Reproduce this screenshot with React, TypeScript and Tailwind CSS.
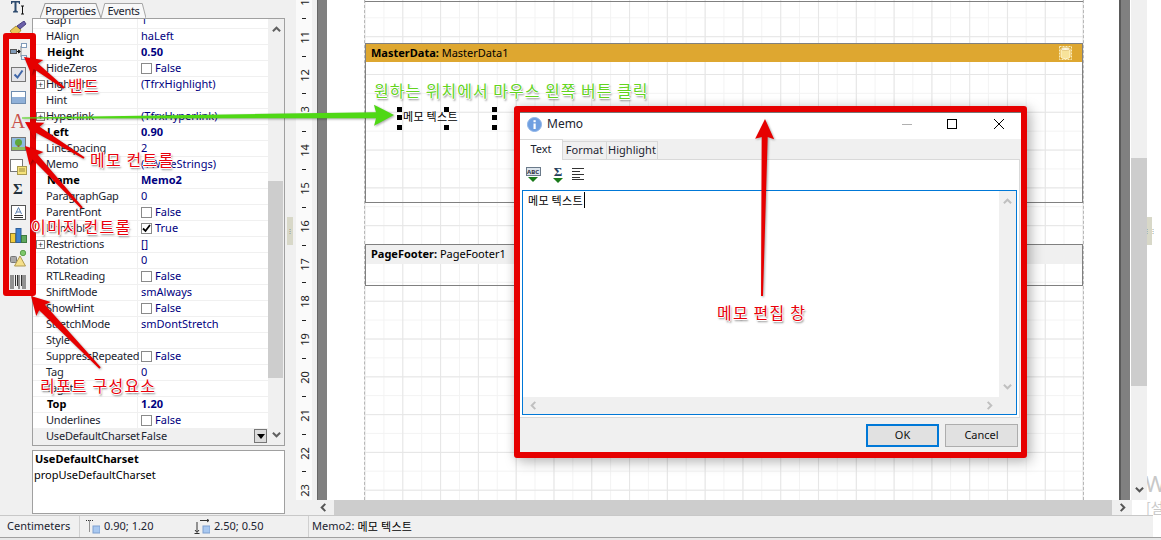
import type { ReactNode } from 'react';

const KR = "font-['Noto_Sans_CJK_KR','Noto_Sans',sans-serif]";

type Row = {
  name: string;
  value?: string;
  bold?: boolean;
  plus?: boolean;
  check?: boolean;
  checked?: boolean;
  selected?: boolean;
};

const rows: Row[] = [
  { name: 'Gap1', value: '1' },
  { name: 'HAlign', value: 'haLeft' },
  { name: 'Height', value: '0.50', bold: true },
  { name: 'HideZeros', value: 'False', check: true },
  { name: 'Highlight', value: '(TfrxHighlight)', plus: true },
  { name: 'Hint' },
  { name: 'Hyperlink', value: '(TfrxHyperlink)', plus: true },
  { name: 'Left', value: '0.90', bold: true },
  { name: 'LineSpacing', value: '2' },
  { name: 'Memo', value: '(TWideStrings)' },
  { name: 'Name', value: 'Memo2', bold: true },
  { name: 'ParagraphGap', value: '0' },
  { name: 'ParentFont', value: 'False', check: true },
  { name: 'Printable', value: 'True', check: true, checked: true },
  { name: 'Restrictions', value: '[]', plus: true },
  { name: 'Rotation', value: '0' },
  { name: 'RTLReading', value: 'False', check: true },
  { name: 'ShiftMode', value: 'smAlways' },
  { name: 'ShowHint', value: 'False', check: true },
  { name: 'StretchMode', value: 'smDontStretch' },
  { name: 'Style' },
  { name: 'SuppressRepeated', value: 'False', check: true },
  { name: 'Tag', value: '0' },
  { name: 'TagStr' },
  { name: 'Top', value: '1.20', bold: true },
  { name: 'Underlines', value: 'False', check: true },
  { name: 'UseDefaultCharset', value: 'False', selected: true },
];

const rulerNumbers = [10, 11, 12, 13, 14, 15, 16, 17, 18, 19, 20, 21, 22, 23];

function Chevron({ dir, color = '#555555', size = 9 }: { dir: 'up' | 'down' | 'left' | 'right'; color?: string; size?: number }) {
  const points = {
    up: '1,7 5,3 9,7',
    down: '1,3 5,7 9,3',
    left: '7,1 3,5 7,9',
    right: '3,1 7,5 3,9',
  }[dir];
  return (
    <svg width={size} height={size} viewBox="0 0 10 10" className="shrink-0">
      <polyline points={points} fill="none" stroke={color} strokeWidth="2.2" />
    </svg>
  );
}

function ToolCell({ children, short }: { children: ReactNode; short?: boolean }) {
  return <div className={`flex w-[36px] shrink-0 items-center justify-center ${short ? 'h-[19px]' : 'h-[23px]'}`}>{children}</div>;
}

function Toolbar() {
  return (
    <div className="-mt-[2px] flex w-[32px] shrink-0 flex-col items-start overflow-hidden bg-[#f0f0f0]">
      <ToolCell short>
        <svg width="14" height="15" viewBox="0 0 14 15">
          <path d="M0 1h9v3H8L7.500 2.500H5.500v8l1.500 1v1H2v-1l1.500-1v-8h-2L1 4H0z" fill="#2d4a6e" />
          <path d="M10 6h3M10 14h3M11.500 6v8" stroke="#111" fill="none" />
        </svg>
      </ToolCell>
      <ToolCell>
        <svg width="18" height="16" viewBox="0 0 18 16">
          <path d="M1 10l6-5 5 4c-2 4-7 7-11 1z" fill="#e8c75a" stroke="#a8903c" />
          <path d="M8 5l7-5 2 3-6 5z" fill="#6a5fa8" stroke="#4a4080" />
        </svg>
      </ToolCell>
      <ToolCell>
        <svg width="17" height="17" viewBox="0 0 17 17">
          <rect x="0.500" y="6.500" width="6" height="4" fill="#7f9ab8" stroke="#555" />
          <path d="M7 8.500h2M8.500 7l2 1.500-2 1.500z" stroke="#111" fill="#111" />
          <path d="M11 3v11" stroke="#888" />
          <rect x="11.500" y="0.500" width="5" height="4" fill="#fff" stroke="#7f9ab8" />
          <rect x="11.500" y="12.500" width="5" height="4" fill="#e8f0fa" stroke="#7f9ab8" />
        </svg>
      </ToolCell>
      <ToolCell>
        <svg width="15" height="15" viewBox="0 0 15 15">
          <rect x="0.500" y="0.500" width="14" height="14" fill="#e4e4e8" stroke="#777" />
          <path d="M3.500 7.500l3 3 5-7" fill="none" stroke="#3f66a8" strokeWidth="2" />
        </svg>
      </ToolCell>
      <ToolCell>
        <svg width="15" height="13" viewBox="0 0 15 13">
          <rect x="0.500" y="0.500" width="14" height="12" fill="#fff" stroke="#6f8db0" />
          <rect x="1" y="6" width="13" height="6" fill="#8fb0d8" />
        </svg>
      </ToolCell>
      <ToolCell>
        <span className="font-['Liberation_Serif',serif] text-[20px] leading-none text-[#c8504a]">A</span>
      </ToolCell>
      <ToolCell>
        <svg width="15" height="14" viewBox="0 0 15 14">
          <rect x="0.500" y="0.500" width="14" height="13" fill="#8fbbe0" stroke="#777" />
          <circle cx="7.500" cy="5.500" r="3.500" fill="#5fa83c" />
          <rect x="6.500" y="8" width="2" height="3" fill="#8a6a3a" />
          <rect x="1" y="10" width="13" height="3" fill="#8fc060" />
        </svg>
      </ToolCell>
      <ToolCell>
        <svg width="17" height="16" viewBox="0 0 17 16">
          <rect x="0.500" y="0.500" width="12" height="12" fill="#fff" stroke="#777" />
          <rect x="7.500" y="7.500" width="9" height="8" fill="#f5e27a" stroke="#a89a50" />
          <path d="M9 10h6M9 12h6" stroke="#9a8a40" />
        </svg>
      </ToolCell>
      <ToolCell>
        <span className="font-['Liberation_Serif',serif] text-[15px] leading-none font-bold text-[#23303c]">Σ</span>
      </ToolCell>
      <ToolCell>
        <svg width="15" height="15" viewBox="0 0 15 15">
          <rect x="0.500" y="0.500" width="14" height="14" fill="#fff" stroke="#555" />
          <path d="M7.500 2.500l-3 6.500M7.500 2.500l3 6.500M5.500 7h4" stroke="#5a7fb0" fill="none" />
          <path d="M3 10.500h9M3 12.500h9" stroke="#333" />
        </svg>
      </ToolCell>
      <ToolCell>
        <svg width="17" height="15" viewBox="0 0 17 15">
          <rect x="0.500" y="5.500" width="5" height="9" fill="#f2cc3c" stroke="#8a7a30" />
          <rect x="6" y="0.500" width="5" height="14" fill="#3f82d0" stroke="#2f5f9a" />
          <rect x="11.500" y="7.500" width="5" height="7" fill="#5fa85c" stroke="#3f7a40" />
        </svg>
      </ToolCell>
      <ToolCell>
        <svg width="17" height="17" viewBox="0 0 17 17">
          <rect x="0.500" y="6.500" width="6" height="6" rx="1" fill="#a8a8a8" stroke="#777" />
          <circle cx="13" cy="3" r="2.700" fill="#7fc86a" stroke="#5fa04c" />
          <path d="M10 6l5.500 10h-11z" fill="#f5e08a" stroke="#b09a50" />
        </svg>
      </ToolCell>
      <ToolCell>
        <svg width="16" height="16" viewBox="0 0 16 16">
          <path d="M1 1v14M3 1v14M5.500 1v11M7.500 1v11M9 1v14M11.500 1v11M13 1v14M15 1v14" stroke="#333" fill="none" />
        </svg>
      </ToolCell>
    </div>
  );
}

function Checkbox({ checked }: { checked?: boolean }) {
  return (
    <span className="flex h-[11px] w-[11px] shrink-0 items-center justify-center border border-[#8a8a8a] bg-white">
      {checked && (
        <svg width="9" height="9" viewBox="0 0 9 9">
          <path d="M1 4.500l2.500 2.500 4.500-6" fill="none" stroke="#000" strokeWidth="1.800" />
        </svg>
      )}
    </span>
  );
}

function PropertyRow({ row }: { row: Row }) {
  return (
    <div className={`flex h-[16px] shrink-0 border-b border-[#f0f0f0] ${row.selected ? 'bg-[#f0f0f0]' : 'bg-white'}`}>
      <div className="relative flex w-[105px] shrink-0 items-center border-r border-[#f0f0f0] pl-[13px]">
        {row.plus && (
          <span className="absolute top-[3px] left-[3px] flex h-[9px] w-[9px] items-center justify-center border border-[#808080] bg-white text-[9px] leading-none text-[#333]">
            +
          </span>
        )}
        <span className={`whitespace-nowrap text-[11px] ${row.bold ? 'pl-[1px] font-bold text-black' : 'tracking-[-0.2px] text-[#1b2430]'}`}>{row.name}</span>
      </div>
      <div className="relative flex flex-1 items-center gap-[3px] pl-[3px]">
        {row.check && <Checkbox checked={row.checked} />}
        <span className={`whitespace-nowrap text-[11px] ${row.bold ? 'font-bold text-[#00007f]' : row.selected ? 'text-[#1b2430]' : 'text-[#00007f]'}`}>{row.value}</span>
        {row.selected && (
          <span className="absolute top-[0px] right-[1px] flex h-[14px] w-[13px] items-center justify-center border border-[#777] bg-[#dcdcdc]">
            <span className="h-0 w-0 border-x-[4px] border-t-[5px] border-x-transparent border-t-black" />
          </span>
        )}
      </div>
    </div>
  );
}

function InspectorTab({ label, width }: { label: string; width: string }) {
  return (
    <div className={`relative flex h-[15px] items-center justify-center pt-[1px] text-[11px] tracking-[-0.3px] text-[#1b2430] ${width}`}>
      <svg className="absolute inset-0 h-full w-full" viewBox="0 0 60 15" preserveAspectRatio="none">
        <path d="M0 15L5 0.500H55L60 15" fill="#f8f8f8" stroke="#9a9a9a" />
      </svg>
      <span className="relative">{label}</span>
    </div>
  );
}

function Inspector() {
  return (
    <div className="flex w-[254px] shrink-0 flex-col">
      <div className="flex h-[18px] shrink-0 items-end pl-[8px]">
        <InspectorTab label="Properties" width="w-[61px]" />
        <InspectorTab label="Events" width="w-[45px]" />
      </div>
      <div className="flex h-[428px] shrink-0 overflow-hidden border border-[#a0a0a0] ml-[0px] mr-[1px]">
        <div className="-mt-[6px] flex w-[235px] shrink-0 flex-col">
          {rows.map((row) => (
            <PropertyRow key={row.name} row={row} />
          ))}
        </div>
        <div className="relative flex flex-1 flex-col items-center justify-between bg-[#f0f0f0] py-[6px]">
          <Chevron dir="up" color="#606060" />
          <div className="absolute top-[162px] right-[1px] left-0 h-[197px] bg-[#cdcdcd]" />
          <Chevron dir="down" color="#606060" />
        </div>
      </div>
      <div className="mt-[4px] mr-[1px] flex h-[64px] shrink-0 flex-col border border-[#a0a0a0] bg-white pl-[1px] text-[11px] leading-[16px] text-black">
        <span className="pl-[1px] font-bold">UseDefaultCharset</span>
        <span>propUseDefaultCharset</span>
      </div>
    </div>
  );
}

function Ruler() {
  return (
    <div className="flex w-[16px] shrink-0 flex-col items-center overflow-hidden bg-[#fafafa]">
      <div className="-mt-[10px] flex flex-col items-center">
        {rulerNumbers.map((n) => (
          <div key={n} className="flex h-[37.8px] shrink-0 flex-col items-center">
            <div className="flex h-[18.9px] items-center justify-center">
              <span className="-rotate-90 text-[11px] leading-none text-[#222]">{n}</span>
            </div>
            <div className="flex h-[18.9px] items-center justify-center">
              <span className="h-[1px] w-[4px] bg-[#222]" />
            </div>
          </div>
        ))}
      </div>
    </div>
  );
}

function BandIcon() {
  return (
    <svg width="13" height="14" viewBox="0 0 13 14">
      <rect x="0.500" y="0.500" width="12" height="13" fill="none" stroke="#f8eec0" strokeDasharray="2 1" />
      <path d="M2 3c0-2 9-2 9 0v8c0 2-9 2-9 0z" fill="#f7e39a" stroke="#fff6d0" />
      <ellipse cx="6.500" cy="3" rx="4.500" ry="1.500" fill="#fff8e0" stroke="#c8a040" strokeWidth="0.500" />
    </svg>
  );
}

function Handle({ pos }: { pos: string }) {
  return <span className={`absolute h-[5px] w-[5px] bg-black ${pos}`} />;
}

function Page() {
  return (
    <div className="flex h-full w-[720px] shrink-0 flex-col border-x border-dashed border-[#b8b8b8] bg-white bg-[linear-gradient(to_right,#e6e6e6_1px,transparent_1px),linear-gradient(to_bottom,#e6e6e6_1px,transparent_1px),linear-gradient(to_right,#f3f3f3_1px,transparent_1px),linear-gradient(to_bottom,#f3f3f3_1px,transparent_1px)] bg-size-[37.8px_37.8px,37.8px_37.8px,18.9px_18.9px,18.9px_18.9px] bg-position-[37.3px_36.2px]">
      <div className="h-[2px] shrink-0 border-b border-[#808080]" />
      <div className="relative mt-[41px] h-[160px] shrink-0 border border-[#808080]">
        <div className="flex h-[18px] items-center justify-between bg-[#dea730] pr-[10px] pl-[5px] text-[11px] text-black">
          <span>
            <b>MasterData:</b> MasterData1
          </span>
          <BandIcon />
        </div>
        <Handle pos="left-[31px] top-[63px]" />
        <Handle pos="left-[78px] top-[63px]" />
        <Handle pos="left-[126px] top-[63px]" />
        <Handle pos="left-[31px] top-[71px]" />
        <Handle pos="left-[126px] top-[71px]" />
        <Handle pos="left-[31px] top-[81px]" />
        <Handle pos="left-[78px] top-[81px]" />
        <Handle pos="left-[126px] top-[81px]" />
        <span className={`absolute top-[64px] left-[37px] text-[11px] leading-[16px] tracking-[0.3px] whitespace-nowrap text-black ${KR}`}>메모 텍스트</span>
        <span className={`absolute top-[35px] left-[8px] text-[16px] leading-[22px] tracking-[1px] whitespace-nowrap text-[#63d41f] [text-shadow:1px_0_0_#fff,-1px_0_0_#fff,0_1px_0_#fff,0_-1px_0_#fff,1px_2px_2px_#777] ${KR}`}>
          원하는 위치에서 마우스 왼쪽 버튼 클릭
        </span>
      </div>
      <div className="mt-[41px] h-[42px] shrink-0 border border-[#808080]">
        <div className="flex h-[19px] items-center bg-[#f0f0f0] pl-[5px] text-[11px] text-black">
          <span>
            <b>PageFooter:</b> PageFooter1
          </span>
        </div>
      </div>
    </div>
  );
}

function Workspace() {
  return (
    <div className="flex min-w-0 flex-1 flex-col">
      <div className="flex h-[500px] shrink-0">
        <Ruler />
        <div className="w-[5px] shrink-0 bg-[#f0f0f0]" />
        <div className="w-[10px] shrink-0 border-l border-[#666] bg-[#808080]" />
        <div className="flex w-[792px] shrink-0 justify-start overflow-hidden bg-white pl-[37px]">
          <Page />
        </div>
        <div className="w-[11px] shrink-0 border-l-[2px] border-[#5a5a5a] bg-[#808080]" />
        <div className="w-[1px] shrink-0 bg-white" />
        <div className="relative flex w-[16px] shrink-0 flex-col items-center justify-end bg-[#f0f0f0] pb-[6px]">
          <div className="absolute top-[158px] left-0 h-[228px] w-full bg-[#cdcdcd]" />
          <Chevron dir="down" />
        </div>
        <div className="relative flex-1 overflow-hidden bg-white">
          <div className="absolute top-[217px] left-0 flex h-[28px] w-[5px] flex-col items-center justify-center bg-[#d8d8c8] text-[6px] leading-[3px] text-[#777]">⋮⋮</div>
          <span className="absolute top-[470px] -left-[2px] text-[22px] leading-[26px] text-[#c8c8c8]">W</span>
        </div>
      </div>
      <div className="flex h-[15px] shrink-0 items-center bg-[#f0f0f0] pl-[16px]">
        <div className="flex w-[22px] shrink-0 justify-center">
          <Chevron dir="left" />
        </div>
        <div className="h-full w-[778px] shrink-0 bg-[#cdcdcd]" />
        <div className="flex w-[20px] shrink-0 justify-center">
          <Chevron dir="right" />
        </div>
        <div className={`relative flex-1 self-stretch overflow-hidden bg-white text-[14px] leading-[15px] text-[#c8c8c8] ${KR}`}>
          <span className="absolute left-[14px]">[설</span>
        </div>
      </div>
    </div>
  );
}

function StatusBar() {
  return (
    <div className="flex h-[22px] w-[1153px] shrink-0 items-center border-t border-[#c8c8c8] bg-[#f0f0f0] text-[11px] text-[#1b2430]">
      <div className="flex h-full w-[80px] shrink-0 items-center border-r border-[#d0d0d0] pl-[7px]">Centimeters</div>
      <div className="flex w-[108px] shrink-0 items-center gap-[4px] pl-[6px]">
        <svg width="14" height="15" viewBox="0 0 14 15">
          <path d="M0 1.500h7M3.500 1.500v12" stroke="#333" strokeDasharray="1 1" fill="none" />
          <rect x="7" y="7" width="7" height="7" fill="#a8c8f0" stroke="#7fa0d0" />
        </svg>
        <span>0.90; 1.20</span>
      </div>
      <div className="flex h-full w-[121px] shrink-0 items-center gap-[4px] border-r border-[#d0d0d0] pl-[6px]">
        <svg width="16" height="15" viewBox="0 0 16 15">
          <path d="M6 1.500h9M13 0l2 1.500-2 1.500M3 3v10M1 11l2 2.500 2-2.500M0.500 14.500h5" stroke="#333" fill="none" />
          <rect x="9" y="7" width="7" height="7" fill="#a8c8f0" stroke="#7fa0d0" />
        </svg>
        <span>2.50; 0.50</span>
      </div>
      <div className="flex flex-1 items-center gap-[3px] pl-[3px]">
        <span>Memo2:</span>
        <span className={`text-[11px] tracking-[0.3px] text-black ${KR}`}>메모 텍스트</span>
      </div>
    </div>
  );
}

function MemoDialog() {
  return (
    <div className="absolute top-[106px] left-[514px] flex h-[352px] w-[513px] flex-col rounded-[3px] border-[6px] border-[#e60000] bg-[#f0f0f0] shadow-[4px_4px_14px_rgba(0,0,0,0.25),0_0_10px_rgba(0,0,0,0.1)]">
      <div className="flex h-[27px] shrink-0 items-center border-t border-[#777] bg-white pb-[4px] pl-[7px]">
        <svg width="15" height="15" viewBox="0 0 15 15">
          <circle cx="7.500" cy="7.500" r="7" fill="#6f9fe0" stroke="#8fb4e8" />
          <rect x="6.500" y="6.500" width="2.200" height="5.500" fill="#fff" />
          <rect x="6.500" y="3.200" width="2.200" height="2" fill="#fff" />
        </svg>
        <span className="ml-[5px] text-[12px] text-[#1b2430]">Memo</span>
        <div className="ml-auto flex items-center">
          <span className="mr-[35px] h-[1px] w-[10px] bg-[#b0b0b0]" />
          <span className="mr-[37px] h-[10px] w-[10px] border border-black" />
          <svg width="10" height="10" viewBox="0 0 10 10" className="mr-[17px]">
            <path d="M0 0l10 10M10 0L0 10" stroke="#000" fill="none" />
          </svg>
        </div>
      </div>
      <div className="flex h-[20px] shrink-0 items-end text-[11px] text-[#1b2430]">
        <div className="z-10 -mb-[1px] flex h-[21px] w-[43px] items-center justify-center border-t border-r border-[#d9d9d9] bg-white pb-[2px]">Text</div>
        <div className="flex h-[18px] w-[44px] items-center justify-center border-t border-r border-[#d9d9d9]">Format</div>
        <div className="flex h-[18px] w-[51px] items-center justify-center border-t border-r border-[#d9d9d9]">Highlight</div>
      </div>
      <div className="mr-[1px] flex h-[259px] shrink-0 flex-col border border-l-0 border-[#d9d9d9] bg-white">
        <div className="flex h-[30px] shrink-0 items-center gap-[8px] pb-[1px] pl-[5px]">
          <div className="flex w-[16px] flex-col items-center">
            <div className="flex h-[9px] w-[15px] items-center justify-center border border-[#6a7a8a] bg-[#dce4ec] text-[6px] leading-none font-bold text-[#334]">ABC</div>
            <span className="mt-[1px] h-0 w-0 border-x-[5px] border-t-[5px] border-x-transparent border-t-[#1a7a1a]" />
          </div>
          <div className="ml-[2px] flex w-[14px] flex-col items-center">
            <span className="font-['Liberation_Serif',serif] text-[13px] leading-[11px] font-bold text-[#23405c]">Σ</span>
            <span className="mt-[1px] h-0 w-0 border-x-[5px] border-t-[5px] border-x-transparent border-t-[#1a7a1a]" />
          </div>
          <svg width="12" height="12" viewBox="0 0 12 12" className="mb-[2px] ml-[-1px]">
            <path d="M0 0.500h12M0 3.500h8M0 6.500h12M0 9.500h8M0 11.500h12" stroke="#333" fill="none" />
          </svg>
        </div>
        <div className="mx-[2px] flex h-[225px] min-h-0 flex-col border border-[#0078d7]">
          <div className="flex min-h-0 flex-1">
            <div className="flex-1 pt-[2px] pl-[5px] text-[11px] leading-[14px]">
              <span className={`border-r border-black pr-[1px] leading-[14px] tracking-[0.3px] text-black ${KR}`}>메모 텍스트</span>
            </div>
            <div className="flex w-[17px] shrink-0 flex-col items-center justify-between bg-[#f0f0f0] py-[6px]">
              <Chevron dir="up" color="#c0c0c0" />
              <Chevron dir="down" color="#c0c0c0" />
            </div>
          </div>
          <div className="flex h-[17px] shrink-0 items-center justify-between bg-[#f0f0f0] pr-[22px] pl-[6px]">
            <Chevron dir="left" color="#c0c0c0" />
            <Chevron dir="right" color="#c0c0c0" />
          </div>
        </div>
      </div>
      <div className="flex flex-1 items-start justify-end gap-[6px] pt-[6px] pr-[3px] text-[11px] text-[#111]">
        <button className="h-[23px] w-[73px] border-2 border-[#0078d7] bg-[#e1e1e1]">OK</button>
        <button className="h-[23px] w-[73px] border border-[#adadad] bg-[#e1e1e1]">Cancel</button>
      </div>
    </div>
  );
}

function arrowPoints(tx: number, ty: number, x: number, y: number, tailW: number, shaftW: number, headW: number, headL: number) {
  const len = Math.hypot(x - tx, y - ty);
  const ux = (x - tx) / len;
  const uy = (y - ty) / len;
  const nx = -uy;
  const ny = ux;
  const bx = x - ux * headL;
  const by = y - uy * headL;
  const p = (px: number, py: number, off: number) => `${px + nx * off},${py + ny * off}`;
  return [
    p(tx, ty, tailW / 2),
    p(bx, by, shaftW / 2),
    p(bx - ux * 2, by - uy * 2, headW / 2),
    `${x},${y}`,
    p(bx - ux * 2, by - uy * 2, -headW / 2),
    p(bx, by, -shaftW / 2),
    p(tx, ty, -tailW / 2),
  ].join(' ');
}

function Annotations() {
  return (
    <svg className="pointer-events-none absolute top-0 left-0 h-[540px] w-[1161px] drop-shadow-[1px_1px_1px_rgba(0,0,0,0.35)]" viewBox="0 0 1161 540">
      <polygon points={arrowPoints(64, 88, 24, 57, 2, 7, 19, 15)} fill="#e60000" />
      <polygon points={arrowPoints(84, 158, 25, 122, 2, 7, 19, 15)} fill="#e60000" />
      <polygon points={arrowPoints(82, 208, 25, 146, 2, 7, 19, 15)} fill="#e60000" />
      <polygon points={arrowPoints(100, 368, 31, 296, 2, 8, 20, 16)} fill="#e60000" />
      <polygon points={arrowPoints(22, 118, 394, 115, 1, 6, 21, 18)} fill="#4fd815" />
      <polygon points={arrowPoints(762, 296, 765, 119, 2, 6, 19, 18)} fill="#e60000" />
    </svg>
  );
}

function Note({ pos, children }: { pos: string; children: ReactNode }) {
  return (
    <span className={`absolute text-[16px] leading-[22px] tracking-[1.2px] whitespace-nowrap text-[#e8000a] [text-shadow:1px_0_0_#fff,-1px_0_0_#fff,0_1px_0_#fff,0_-1px_0_#fff,1px_2px_2px_#777] ${KR} ${pos}`}>
      {children}
    </span>
  );
}

export default function App() {
  return (
    <div className="relative flex h-[540px] w-[1161px] flex-col overflow-hidden bg-white font-['Noto_Sans',sans-serif]">
      <div className="flex h-[515px] shrink-0 bg-[#f0f0f0]">
        <Toolbar />
        <Inspector />
        <div className="relative w-[10px] shrink-0 bg-[#f0f0f0]">
          <div className="absolute top-[217px] left-[1px] flex h-[28px] w-[6px] items-center justify-center bg-[#d8d8c8] text-[6px] leading-[3px] text-[#777]">⋮</div>
        </div>
        <Workspace />
      </div>
      <StatusBar />
      <div className="flex-1 border-t border-[#a0a0a0] bg-[#e8e8e8]" />

      <div className="absolute top-[33px] left-[3px] h-[263px] w-[33px] rounded-[3px] border-[6px] border-[#e60000]" />
      <MemoDialog />
      <Annotations />
      <Note pos="left-[68px] top-[74px]">밴드</Note>
      <Note pos="left-[90px] top-[148px]">메모 컨트롤</Note>
      <Note pos="left-[31px] top-[215px]">이미지 컨트롤</Note>
      <Note pos="left-[40px] top-[374px]">리포트 구성요소</Note>
      <Note pos="left-[717px] top-[301px]">메모 편집 창</Note>
    </div>
  );
}
